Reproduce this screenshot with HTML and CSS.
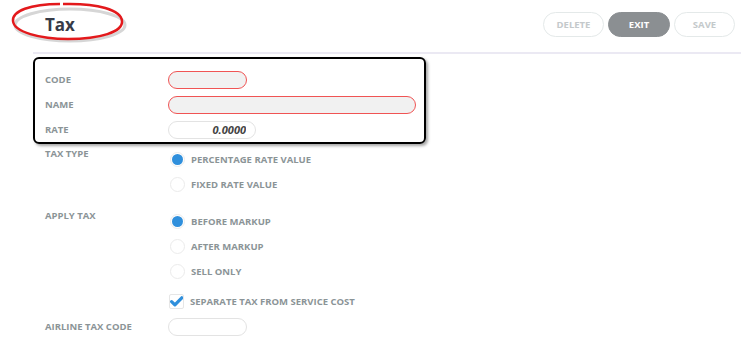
FILE: index.html
```html
<!DOCTYPE html>
<html>
<head>
    <title>Tax</title>
    <link rel="stylesheet" href="styles.css">
</head>
<body>
    <div class="page">
        <div class="header">
            <h1 class="title">Tax</h1>
            <div class="actions">
                <button class="btn">DELETE</button>
                <button class="btn btn-dark">EXIT</button>
                <button class="btn">SAVE</button>
            </div>
        </div>

        <div class="form">
            <div class="row">
                <label class="label">CODE</label>
                <input class="field field-code field-error" type="text">
            </div>
            <div class="row">
                <label class="label">NAME</label>
                <input class="field field-name field-error" type="text">
            </div>
            <div class="row">
                <label class="label">RATE</label>
                <input class="field field-rate" type="text" value="0.0000">
            </div>

            <div class="group group-type">
                <div class="label label-top">TAX TYPE</div>
                <div class="options">
                    <div class="option"><span class="radio checked"></span>PERCENTAGE RATE VALUE</div>
                    <div class="option"><span class="radio"></span>FIXED RATE VALUE</div>
                </div>
            </div>

            <div class="group group-apply">
                <div class="label label-top">APPLY TAX</div>
                <div class="options">
                    <div class="option"><span class="radio checked"></span>BEFORE MARKUP</div>
                    <div class="option"><span class="radio"></span>AFTER MARKUP</div>
                    <div class="option"><span class="radio"></span>SELL ONLY</div>
                </div>
            </div>

            <div class="row row-check">
                <span class="label"></span>
                <div class="option">
                    <span class="check">
                        <svg width="13" height="11" viewBox="0 0 13 11"><path d="M1.6 5.6 L4.9 8.9 L11.8 1.8" fill="none" stroke="#2f8fdc" stroke-width="3.2" stroke-linecap="round" stroke-linejoin="round"/></svg>
                    </span>SEPARATE TAX FROM SERVICE COST
                </div>
            </div>

            <div class="row">
                <label class="label">AIRLINE TAX CODE</label>
                <input class="field field-code" type="text">
            </div>
        </div>

        <!-- annotations drawn over the screenshot -->
        <svg class="mark-title" width="130" height="50" viewBox="0 0 130 50">
            <ellipse cx="70" cy="26" rx="55" ry="16" fill="none" stroke="#d6d6d6" stroke-width="3"/>
            <path d="M60 5 C 30 5, 12 12, 13 22 C 14 33, 40 40, 68 40 C 100 40, 123 33, 122 22 C 121 11, 98 4, 63 5" fill="none" stroke="#e3191c" stroke-width="2.5"/>
        </svg>
        <div class="mark-box"></div>
    </div>
</body>
</html>
```

FILE: styles.css
```css
body { margin: 0; background: #fff; font-family: "Open Sans", "Noto Sans", sans-serif; }
.page { position: relative; width: 751px; height: 346px; overflow: hidden; }

.header { display: flex; align-items: center; justify-content: space-between; height: 54px; margin: 0 10px 0 33px; padding-left: 12px; padding-right: 6px; border-bottom: 2px solid #ebe9f3; box-sizing: border-box; }
.title { margin: 0; font-size: 17px; font-weight: 700; color: #373b47; margin-top: -3px; }
.actions { display: flex; gap: 4px; margin-top: -4px; }
.btn { width: 61px; height: 25px; border-radius: 13px; border: 1px solid #e4e9e9; background: #fff; color: #c4c9cb; font-family: "Open Sans", sans-serif; font-size: 9.5px; font-weight: 700; padding: 0; }
.btn-dark { width: 62px; background: #8b8f92; border-color: #8b8f92; color: #fff; }

.form { padding: 13px 0 0 45px; }
.row { display: flex; align-items: center; height: 25px; }
.label { width: 123px; flex-shrink: 0; font-size: 9.5px; font-weight: 700; color: #8b9497; }
.label-top { align-self: flex-start; line-height: 13px; }

.field { height: 18px; box-sizing: border-box; border: 1px solid #e3e3e3; border-radius: 9px; background: #fff; padding: 0 9px; font-family: "Open Sans", sans-serif; }
.field-error { border-color: #f05454; background: #f1f1f1; }
.field-code { width: 79px; }
.field-name { width: 248px; }
.field-rate { width: 88px; text-align: right; font-size: 11px; font-weight: 700; font-style: italic; color: #444; }

.group { display: flex; }
.group-type { margin-top: 5px; }
.group-apply { margin-top: 12px; }
.options { display: flex; flex-direction: column; }
.option { display: flex; align-items: center; height: 25px; font-size: 9.5px; font-weight: 700; color: #8b9497; }

.radio { width: 15px; height: 15px; box-sizing: border-box; border: 1px solid #ebebeb; border-radius: 50%; margin: 0 6px 0 2px; display: flex; align-items: center; justify-content: center; }
.radio.checked::after { content: ""; width: 11px; height: 11px; border-radius: 50%; background: #2f8fdc; }

.row-check { margin-top: 5px; }
.check { width: 15px; height: 15px; box-sizing: border-box; border: 1px solid #e6e6e6; border-radius: 2px; margin: 0 6px 0 1px; display: flex; align-items: center; justify-content: center; }

.mark-title { position: absolute; left: 0; top: -1px; }
.mark-box { position: absolute; left: 33px; top: 57px; width: 393px; height: 87px; box-sizing: border-box; border: 2px solid #000; border-radius: 6px; box-shadow: 2px 2px 3px rgba(0,0,0,0.35); }
```
